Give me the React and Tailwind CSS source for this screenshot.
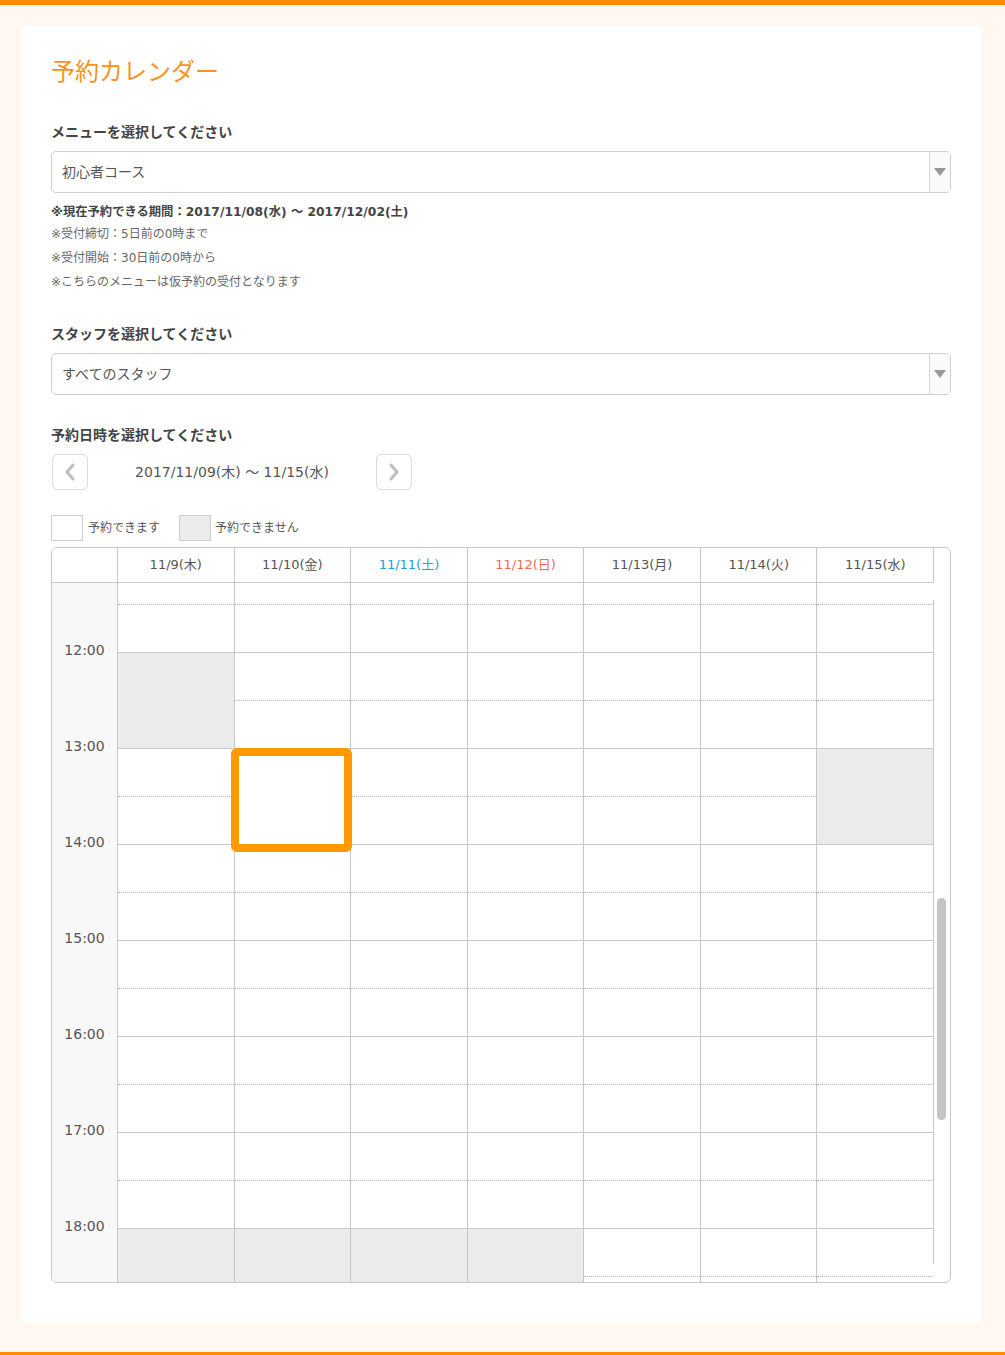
import React from "react";

const days = [
  { label: "11/9(木)", color: "text-[#555]" },
  { label: "11/10(金)", color: "text-[#555]" },
  { label: "11/11(土)", color: "text-[#1ea0dc]" },
  { label: "11/12(日)", color: "text-[#f26c4f]" },
  { label: "11/13(月)", color: "text-[#555]" },
  { label: "11/14(火)", color: "text-[#555]" },
  { label: "11/15(水)", color: "text-[#555]" },
];

const specials = {
  0: [{ s: 2, n: 2, t: "gray" }, { s: 14, n: 2, t: "gray" }],
  1: [{ s: 4, n: 2, t: "sel" }, { s: 14, n: 2, t: "gray" }],
  2: [{ s: 14, n: 2, t: "gray" }],
  3: [{ s: 14, n: 2, t: "gray" }],
  6: [{ s: 4, n: 2, t: "gray" }],
};

function buildSegments(ci) {
  const sp = specials[ci] || [];
  const segs = [];
  let i = 0;
  while (i < 16) {
    const hit = sp.find((x) => x.s === i);
    if (hit) {
      segs.push({ start: i, n: hit.n, t: hit.t });
      i += hit.n;
    } else {
      segs.push({ start: i, n: 1, t: "free" });
      i += 1;
    }
  }
  return segs;
}

function Segment({ seg }) {
  const endIdx = seg.start + seg.n - 1;
  const hourEnd = endIdx % 2 === 1;
  const border = hourEnd
    ? "border-b border-solid border-[#c8c8c8]"
    : "border-b border-dotted border-[#b4b4b4]";
  const h = seg.n === 2 ? "h-[96px]" : "h-[48px]";
  const bg = seg.t === "gray" ? "bg-[#ebebeb]" : "bg-white";
  return (
    <div className={`${h} ${border} ${bg} relative`}>
      {seg.t === "sel" && (
        <div className="absolute top-[-1px] left-[-4px] w-[121px] h-[104px] border-[8px] border-[#ff9900] rounded-[6px] bg-white z-10" />
      )}
    </div>
  );
}

function SelectBox({ text }) {
  return (
    <div className="flex h-[42px] border border-[#cfcfcf] rounded-[5px] overflow-hidden bg-white">
      <div className="flex-1 flex items-center pl-[10px] text-[14px] text-[#555]">{text}</div>
      <div className="w-[21px] border-l border-[#d6d6d6] bg-[#fafafa] flex items-center justify-center">
        <svg width="12" height="8" viewBox="0 0 12 8">
          <polygon points="0,0 12,0 6,8" fill="#999" />
        </svg>
      </div>
    </div>
  );
}

function NavBtn({ dir }) {
  return (
    <div className="w-[36px] h-[36px] border border-[#dcdcdc] rounded-[5px] bg-white flex items-center justify-center">
      <svg width="12" height="20" viewBox="0 0 12 20">
        {dir === "left" ? (
          <polyline points="9,3 3,10 9,17" fill="none" stroke="#bdbdbd" strokeWidth="3" strokeLinecap="round" strokeLinejoin="round" />
        ) : (
          <polyline points="3,3 9,10 3,17" fill="none" stroke="#bdbdbd" strokeWidth="3" strokeLinecap="round" strokeLinejoin="round" />
        )}
      </svg>
    </div>
  );
}

export default function App() {
  const times = ["12:00", "13:00", "14:00", "15:00", "16:00", "17:00", "18:00", ""];
  return (
    <div className="min-h-[1355px] bg-[#fef8f0] flex flex-col font-['DejaVu_Sans','Noto_Sans_CJK_JP',sans-serif]">
      <div className="h-[5px] bg-[#ff8c00]" />
      <div className="px-[21px] pt-[21px] pb-[29px]">
        <div className="bg-white rounded-[5px] px-[30px] pt-[30px] pb-[40px] w-[960px]">
          <h1 className="h-[32px] leading-[32px] text-[24px] text-[#f7931e] font-normal">予約カレンダー</h1>

          <div className="mt-[34px] h-[20px] leading-[20px] text-[14px] font-bold text-[#444]">メニューを選択してください</div>
          <div className="mt-[9px]">
            <SelectBox text="初心者コース" />
          </div>
          <div className="mt-[7px] text-[#555]">
            <div className="h-[22px] leading-[24px] text-[12.3px] font-bold text-[#444] whitespace-nowrap">※現在予約できる期間：2017/11/08(水) ～ 2017/12/02(土)</div>
            <div className="h-[24px] leading-[24px] text-[12px] text-[#666]">※受付締切：5日前の0時まで</div>
            <div className="h-[24px] leading-[24px] text-[12px] text-[#666]">※受付開始：30日前の0時から</div>
            <div className="h-[24px] leading-[24px] text-[12px] text-[#666]">※こちらのメニューは仮予約の受付となります</div>
          </div>

          <div className="mt-[30px] h-[20px] leading-[20px] text-[14px] font-bold text-[#444]">スタッフを選択してください</div>
          <div className="mt-[9px]">
            <SelectBox text="すべてのスタッフ" />
          </div>

          <div className="mt-[30px] h-[20px] leading-[20px] text-[14px] font-bold text-[#444]">予約日時を選択してください</div>
          <div className="mt-[9px] flex items-center h-[36px] pl-px">
            <NavBtn dir="left" />
            <div className="w-[288px] text-center text-[14px] text-[#555]">2017/11/09(木) ～ 11/15(水)</div>
            <NavBtn dir="right" />
          </div>

          <div className="mt-[25px] flex items-center h-[26px] text-[12px] text-[#555]">
            <div className="w-[32px] h-[26px] border border-[#cfcfcf] bg-white" />
            <span className="ml-[5px]">予約できます</span>
            <div className="ml-[19px] w-[32px] h-[26px] border border-[#cfcfcf] bg-[#ebebeb]" />
            <span className="ml-[4px]">予約できません</span>
          </div>

          <div className="mt-[6px] border border-[#c8c8c8] rounded-[6px] overflow-hidden h-[736px] bg-white">
            <div className="flex h-[35px]">
              <div className="flex-1 flex border-b border-[#c8c8c8]">
                <div className="w-[65px] bg-white" />
                {days.map((d) => (
                  <div key={d.label} className={`flex-1 border-l border-[#c8c8c8] flex items-center justify-center text-[13px] ${d.color}`}>
                    {d.label}
                  </div>
                ))}
              </div>
              <div className="w-[17px] border-l border-[#c8c8c8]" />
            </div>
            <div className="flex h-[699px]">
              <div className="flex-1 flex overflow-hidden">
                <div className="w-[65px] bg-[#f8f8f8] shrink-0">
                  <div className="mt-[-26px]">
                    <div className="h-[48px]" />
                    {times.map((t, i) => (
                      <div key={i} className="h-[96px] flex items-center justify-center pb-[6px] text-[14px] text-[#555]">
                        {t}
                      </div>
                    ))}
                  </div>
                </div>
                {days.map((d, ci) => (
                  <div key={d.label} className="flex-1 border-l border-[#c8c8c8] min-w-0">
                    <div className="mt-[-26px]">
                      {buildSegments(ci).map((seg) => (
                        <Segment key={seg.start} seg={seg} />
                      ))}
                    </div>
                  </div>
                ))}
              </div>
              <div className="w-[17px] shrink-0 pt-[17px]">
                <div className="h-[664px] border-l border-[#c8c8c8] pl-[3px] pt-[298px]">
                  <div className="w-[9px] h-[222px] rounded-[5px] bg-[#c4c4c4]" />
                </div>
              </div>
            </div>
          </div>
        </div>
      </div>
      <div className="h-[3px] bg-[#ff8c00]" />
    </div>
  );
}
